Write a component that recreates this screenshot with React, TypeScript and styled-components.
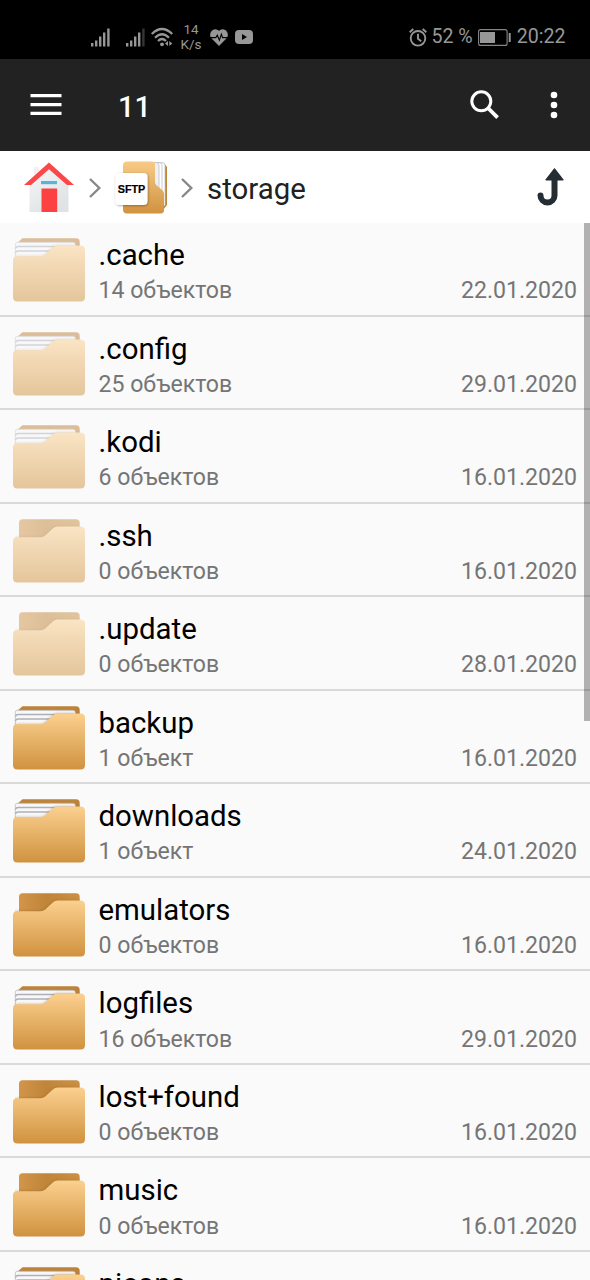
import React from "react";
import styled, { createGlobalStyle } from "styled-components";

const GlobalStyle = createGlobalStyle`
  * { box-sizing: border-box; }
  html, body { margin: 0; height: 100%; overflow: hidden; background: #fafafa; }
  body { font-family: Roboto, "Noto Sans", sans-serif; }
  svg { display: block; flex: none; overflow: visible; }
`;

const Screen = styled.div`
  width: 590px;
  height: 1280px;
  overflow: hidden;
  display: flex;
  flex-direction: column;
`;

const StatusBar = styled.header`
  height: 59px;
  flex: none;
  background: #000;
  color: #979797;
  display: flex;
  justify-content: space-between;
  padding: 14px 24.5px 0 90px;
`;

const StatusGroup = styled.div`
  display: flex;
  align-items: center;
  height: 46px;
`;

const Speed = styled.div`
  width: 22px;
  margin: 0 8px 0 7px;
  font-size: 13.5px;
  line-height: 15px;
  text-align: center;
`;

const StatusText = styled.span<{ $left: number }>`
  margin-left: ${(p) => p.$left}px;
  font-size: 19.6px;
  line-height: 24px;
  white-space: nowrap;
`;

const Toolbar = styled.div`
  height: 92px;
  flex: none;
  background: #222;
  color: #fff;
  display: flex;
  align-items: center;
  padding: 0 32px 0 30px;
`;

const Count = styled.div`
  margin: 3px auto 0 56px;
  font-size: 29px;
  font-weight: 500;
  line-height: 34px;
`;

const PathBar = styled.nav`
  height: 72px;
  flex: none;
  background: #fff;
  display: flex;
  align-items: center;
  padding: 0 26px 0 24px;
`;

const PathName = styled.span`
  margin: 3px auto 0 14px;
  color: #212121;
  font-size: 29.4px;
  line-height: 34px;
`;

const ListArea = styled.main`
  position: relative;
  flex: 1;
  min-height: 0;
  overflow: hidden;
  background: #fafafa;
`;

const ScrollThumb = styled.div`
  position: absolute;
  top: 0;
  right: 0;
  width: 6.5px;
  height: 498px;
  background: rgba(0, 0, 0, 0.29);
`;

const Row = styled.div`
  height: 93.55px;
  display: flex;
  padding: 15px 13px 0;
  border-bottom: 2px solid #dadada;
`;

const RowText = styled.div`
  flex: 1;
  margin-left: 13.5px;
`;

const Name = styled.div`
  color: #000;
  font-size: 29.4px;
  line-height: 34px;
`;

const Meta = styled.div`
  display: flex;
  justify-content: space-between;
  margin-top: 5.2px;
  color: #757575;
  font-size: 23.1px;
  line-height: 27px;
`;

const Signal = ({ faded = false }: { faded?: boolean }) => (
  <svg width="21" height="19" viewBox="0 0 21 19" fill="#979797">
    <rect x="1" y="15" width="2.4" height="3.5" />
    <rect x="5" y="12.5" width="2.4" height="6" />
    <rect x="9" y="8.5" width="2.4" height="10" />
    <rect x="13" y="4.5" width="2.4" height="14" />
    <rect x="17.2" y="0.5" width="2.4" height="18" opacity={faded ? 0.35 : 1} />
  </svg>
);

const Wifi = () => (
  <svg width="22" height="19" viewBox="0 0 22 19" fill="none" stroke="#979797" strokeWidth="2.3">
    <path d="M0.8 6Q11-4 21.2 6M4 9.7Q11 2.8 18 9.7M7 13Q11 9 15 13" />
    <circle cx="11" cy="16.3" r="1.9" fill="#979797" stroke="none" />
    <path d="M17 13v5l-3-2.5zM18.3 13v5l3-2.5z" fill="#979797" stroke="none" />
  </svg>
);

const Heart = () => (
  <svg width="18" height="17" viewBox="0 0 18 17">
    <path d="M9 17L1.6 9.6C-.8 6.8 0 2.6 2.8.9 5-.4 7.6.2 9 2.1 10.4.2 13-.4 15.2.9 18 2.6 18.8 6.8 16.4 9.6z" fill="#979797" />
    <path d="M0 8.6h5.8l1.5-2.4 2.1 5 2-6 1.2 3.4H18" fill="none" stroke="#000" strokeWidth="1.1" />
  </svg>
);

const Video = () => (
  <svg width="18" height="14" viewBox="0 0 18 14">
    <rect width="18" height="14" rx="4" fill="#979797" />
    <path d="M7 4l5 3-5 3z" fill="#000" />
  </svg>
);

const Alarm = () => (
  <svg width="18" height="19" viewBox="0 0 18 19" fill="none" stroke="#979797" strokeWidth="1.9">
    <circle cx="9" cy="10.3" r="7.3" />
    <path d="M9 5.7v5l3.2 2.5M0.7 4.2L4.3 1M17.3 4.2L13.7 1" />
  </svg>
);

const Battery = () => (
  <svg width="33" height="17" viewBox="0 0 33 17">
    <rect x="0.6" y="0.6" width="28.5" height="15.8" rx="2" fill="none" stroke="#858585" strokeWidth="1.1" />
    <rect x="2" y="3" width="15" height="11" fill="#979797" />
    <rect x="30.7" y="4" width="2" height="9" fill="#979797" />
  </svg>
);

const Menu = () => (
  <svg width="32" height="22" viewBox="0 0 32 22" fill="#fff">
    <path d="M.5 0h31v3.3H.5zM.5 9h31v3.3H.5zM.5 17.8h31v3.3H.5z" />
  </svg>
);

const Search = () => (
  <svg width="30" height="30" viewBox="0 0 30 30" fill="none" stroke="#fff">
    <circle cx="11.3" cy="11.3" r="9.5" strokeWidth="3" />
    <path d="M18 18L27.6 27.6" strokeWidth="3.8" />
  </svg>
);

const MoreBox = styled.div`
  margin-left: 50px;
`;

const More = () => (
  <svg width="8" height="28" viewBox="0 0 8 28" fill="#fff">
    <circle cx="4" cy="4" r="3.3" />
    <circle cx="4" cy="14" r="3.3" />
    <circle cx="4" cy="24" r="3.3" />
  </svg>
);

const Home = () => (
  <svg width="50" height="50" viewBox="0 0 50 50">
    <defs>
      <linearGradient id="wall" x2="0.6" y2="1">
        <stop stopColor="#f6f6f6" />
        <stop offset="1" stopColor="#dfe3e5" />
      </linearGradient>
    </defs>
    <path d="M10 5h5v9h-5z" fill="#f1f1f1" />
    <path d="M5.5 23L25 5l19.5 18v27h-39z" fill="url(#wall)" />
    <path d="M0 23L25 .5 50 23h-7L25 7.3 7 23z" fill="#fc4648" />
    <path d="M17 19h16v3.2H17z" fill="#58b5da" />
    <path d="M17.5 26.5h15.7V50H17.5z" fill="#fc4142" />
  </svg>
);

const ChevronBox = styled.div<{ $left: number }>`
  margin: 1px 0 0 ${(p) => p.$left}px;
`;

const Chevron = ({ left }: { left: number }) => (
  <ChevronBox $left={left}>
    <svg width="12" height="20" viewBox="0 0 12 20" fill="none" stroke="#888" strokeWidth="2.4">
      <path d="M1 1l9.3 9L1 19" />
    </svg>
  </ChevronBox>
);

const ServerBox = styled.div`
  margin: 1px 0 0 14px;
`;

const Server = () => (
  <ServerBox>
    <svg width="53" height="53" viewBox="0 0 53 53">
      <defs>
        <linearGradient id="server" x2="0" y2="1">
          <stop stopColor="#f7cb86" />
          <stop offset="1" stopColor="#d0923f" />
        </linearGradient>
        <filter id="soft" x="-20%" y="-20%" width="150%" height="150%">
          <feDropShadow dx="0.6" dy="0.8" stdDeviation="1" floodOpacity="0.35" />
        </filter>
      </defs>
      <path d="M38 2h11l3 4v38l-4 5H38z" fill="#bd8439" />
      <path d="M38 1.5h9q3 0 3 3v40l-12 3z" fill="#fff" stroke="#bfbfc4" strokeWidth="0.8" />
      <path d="M38 1.5h6q3 0 3 3v40l-9 3z" fill="#fff" stroke="#bfbfc4" strokeWidth="0.8" />
      <path d="M38 1.5h3q3 0 3 3v40l-6 3z" fill="#eef0f5" stroke="#bfbfc4" strokeWidth="0.8" />
      <path d="M12 .5h25q3 0 3 3V21q0 2.2 1.8 3.6l5.4 4.5q1.8 1.4 1.8 3.7V49q0 3.5-3.5 3.5H12q-4 0-4-4v-44q0-4 4-4z" fill="url(#server)" />
      <rect x="0.5" y="12" width="32" height="32" rx="4" fill="#fff" filter="url(#soft)" />
      <text x="16.5" y="31.7" textAnchor="middle" fontFamily="Liberation Sans, sans-serif" fontWeight="700" fontSize="10.8" textLength="27.5" stroke="#000" strokeWidth="0.2">SFTP</text>
    </svg>
  </ServerBox>
);

const UpArrow = () => (
  <svg width="27" height="38" viewBox="0 0 27 38">
    <path d="M17.5 10v17.5a7 7 0 0 1-14 0" fill="none" stroke="#242c34" strokeWidth="6" strokeLinecap="round" />
    <path d="M17 .5Q17.5 0 18 .5l8.3 10.7q.7 1.3-.8 1.3h-16q-1.5 0-.8-1.3z" fill="#242c34" />
  </svg>
);

const FolderDefs = () => (
  <svg width="0" height="0">
    <defs>
      <linearGradient id="front" x2="0" y2="1">
        <stop stopColor="#fbd08f" />
        <stop offset="1" stopColor="#d0923f" />
      </linearGradient>
      <linearGradient id="back" x1="0" y1="0" x2="1" y2="0">
        <stop stopColor="#d2954a" />
        <stop offset="0.45" stopColor="#c08539" />
        <stop offset="1" stopColor="#cb9043" />
      </linearGradient>
      <filter id="shade" x="-10%" y="-15%" width="120%" height="130%">
        <feGaussianBlur stdDeviation="1.8" />
      </filter>
      <clipPath id="inside">
        <path d="M2 4H6V3.5Q6.5.2 9.5.2H63q3.7 0 3.7 3.7V30H2z" />
      </clipPath>
    </defs>
  </svg>
);

const FRONT = "M4 18.3h23.5q2.8 0 4.7-1.7l7.6-7.1q2.2-2 4.8-2H67.5q4.5 0 4.5 4.5V59q0 4.5-4.5 4.5H4.5Q0 63.5 0 59V22.3q0-4 4-4z";

const Folder = ({ filled, hidden }: { filled: boolean; hidden: boolean }) => (
  <svg width="72" height="64" viewBox="0 0 72 64" opacity={hidden ? 0.5 : 1}>
    {filled ? (
      <>
        <path d="M9.5.2H63q3.7 0 3.7 3.7V28H3V6z" fill="#bd833a" />
        <path d="M2.3 26V6.3q0-2 2-2H60q2.5 0 2.5 2.5V26z" fill="#f8f8fa" stroke="#b4b4b8" strokeWidth="0.7" />
        <path d="M2.3 10.5Q3 8.5 5 8.5H60M2.3 15Q3 13 5 13H58" fill="none" stroke="#aeb0b5" strokeWidth="1.3" />
      </>
    ) : (
      <path d="M9.5.2H63q3.7 0 3.7 3.7V28H6V3.7Q6 .2 9.5.2z" fill="url(#back)" />
    )}
    <g clipPath="url(#inside)">
      <path d={FRONT} fill="#7c5217" opacity="0.42" filter="url(#shade)" />
    </g>
    <path d={FRONT} fill="url(#front)" />
  </svg>
);

const entries: [string, string, string][] = [
  [".cache", "14 объектов", "22.01.2020"],
  [".config", "25 объектов", "29.01.2020"],
  [".kodi", "6 объектов", "16.01.2020"],
  [".ssh", "0 объектов", "16.01.2020"],
  [".update", "0 объектов", "28.01.2020"],
  ["backup", "1 объект", "16.01.2020"],
  ["downloads", "1 объект", "24.01.2020"],
  ["emulators", "0 объектов", "16.01.2020"],
  ["logfiles", "16 объектов", "29.01.2020"],
  ["lost+found", "0 объектов", "16.01.2020"],
  ["music", "0 объектов", "16.01.2020"],
  ["picons", "", ""],
];

const Gap = styled.div<{ $w: number }>`
  width: ${(p) => p.$w}px;
`;

export default function App() {
  return (
    <Screen>
      <GlobalStyle />
      <StatusBar>
        <StatusGroup>
          <Signal />
          <Gap $w={14} />
          <Signal faded />
          <Gap $w={5} />
          <Wifi />
          <Speed>14 K/s</Speed>
          <Heart />
          <Gap $w={7} />
          <Video />
        </StatusGroup>
        <StatusGroup>
          <Alarm />
          <StatusText $left={4}>52 %</StatusText>
          <Gap $w={5} />
          <Battery />
          <StatusText $left={6}>20:22</StatusText>
        </StatusGroup>
      </StatusBar>
      <Toolbar>
        <Menu />
        <Count>11</Count>
        <Search />
        <MoreBox>
          <More />
        </MoreBox>
      </Toolbar>
      <PathBar>
        <Home />
        <Chevron left={15} />
        <Server />
        <Chevron left={13} />
        <PathName>storage</PathName>
        <UpArrow />
      </PathBar>
      <ListArea>
        <FolderDefs />
        {entries.map(([name, count, date]) => (
          <Row key={name}>
            <Folder filled={!count.startsWith("0")} hidden={name.startsWith(".")} />
            <RowText>
              <Name>{name}</Name>
              <Meta>
                <span>{count}</span>
                <span>{date}</span>
              </Meta>
            </RowText>
          </Row>
        ))}
        <ScrollThumb />
      </ListArea>
    </Screen>
  );
}
